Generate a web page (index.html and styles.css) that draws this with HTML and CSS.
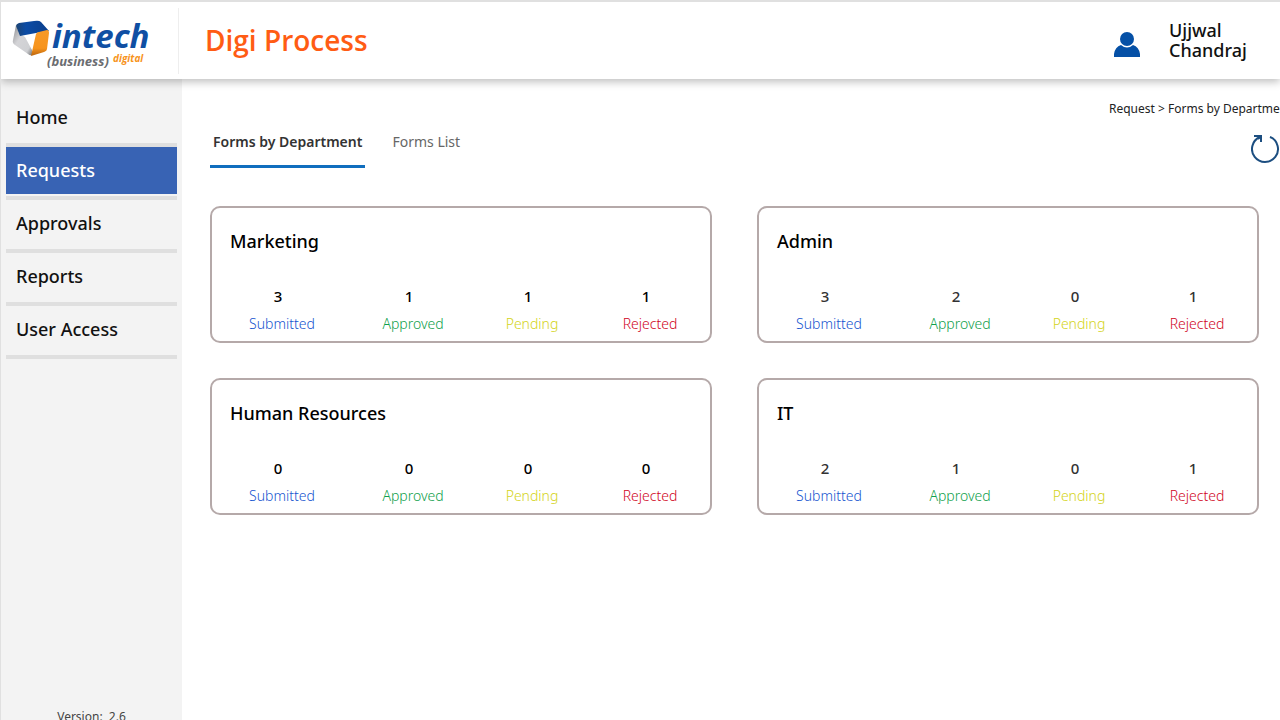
FILE: index.html
```
<!DOCTYPE html>
<html lang="en">
<head>
  <meta charset="UTF-8">
  <title>Digi Process</title>
  <link rel="stylesheet" href="styles.css">
</head>
<body>
  <header class="header">
    <a class="logo" href="#" aria-label="intech (business) digital">
      <svg width="140" height="58" viewBox="0 0 140 58">
        <defs>
          <linearGradient id="grey" x1="0" y1="0" x2="1" y2="1">
            <stop offset="0" stop-color="#88898c"/>
            <stop offset="0.4" stop-color="#d4d4d7"/>
            <stop offset="0.8" stop-color="#cfd0d3"/>
            <stop offset="1" stop-color="#75777a"/>
          </linearGradient>
          <linearGradient id="orange" x1="0" y1="0" x2="0" y2="1">
            <stop offset="0" stop-color="#f79a28"/>
            <stop offset="0.7" stop-color="#f7941d"/>
            <stop offset="1" stop-color="#b9640c"/>
          </linearGradient>
          <linearGradient id="blue" x1="0" y1="0" x2="1" y2="0">
            <stop offset="0" stop-color="#1d4472"/>
            <stop offset="0.3" stop-color="#0b4ba5"/>
            <stop offset="1" stop-color="#0b3f8c"/>
          </linearGradient>
        </defs>
        <path d="M4 13 L1 28 Q0 31 3 33 L16 42 Q18 44 20 43 L20 36 L14 24 L7 21 Z" fill="url(#grey)"/>
        <path d="M8 22 L25 20 L22 30 L20 38 L13 25 Z" fill="#fff"/>
        <path d="M4 14 Q4 12 7 11 L22 9 Q27 8 29 10 L37 19 L24 21 L8 24 Z" fill="url(#blue)"/>
        <path d="M24 22 Q25 20 27 20 L35 18 Q37 18 37 21 L35 37 Q35 39 32 40 L19 44 Z" fill="url(#orange)"/>
        <text class="logo-name" x="40" y="36">intech</text>
        <text class="logo-sub" x="35" y="54">(business)</text>
        <text class="logo-digital" x="101" y="50">digital</text>
      </svg>
    </a>
    <h1>Digi Process</h1>
    <div class="user">
      <svg width="26" height="26" viewBox="0 0 26 26" fill="#0550a6">
        <ellipse cx="13" cy="7" rx="7" ry="7"/>
        <path d="M0 25 V22 Q1 15 7 13 Q13 18 19 13 Q25 15 26 22 V25 Z"/>
      </svg>
      <span class="user-name">Ujjwal<br>Chandraj</span>
    </div>
  </header>

  <div class="layout">
    <aside class="sidebar">
      <nav>
        <a href="#">Home</a>
        <a href="#" class="active">Requests</a>
        <a href="#">Approvals</a>
        <a href="#">Reports</a>
        <a href="#">User Access</a>
      </nav>
      <p class="version">Version:&nbsp; 2.6</p>
    </aside>

    <main>
      <div class="breadcrumb">Request &gt; Forms by Department</div>

      <div class="toolbar">
        <div class="tabs" role="tablist">
          <button type="button" role="tab" aria-selected="true" class="tab active">Forms by Department</button>
          <button type="button" role="tab" aria-selected="false" class="tab">Forms List</button>
        </div>
        <button type="button" class="refresh" aria-label="Refresh">
          <svg width="29" height="30" viewBox="0 0 29 30" fill="none" stroke="#1c4e80" stroke-width="2">
            <path d="M19 3 A13 13 0 1 1 9 3"/>
            <path d="M3 2 H10 V8 M10 2 L7 5"/>
          </svg>
        </button>
      </div>

      <!-- Departments -->
      <div class="cards">
        <section class="card">
          <h2>Marketing</h2>
          <dl class="stats">
            <div class="submitted"><dt>Submitted</dt><dd>3</dd></div>
            <div class="approved"><dt>Approved</dt><dd>1</dd></div>
            <div class="pending"><dt>Pending</dt><dd>1</dd></div>
            <div class="rejected"><dt>Rejected</dt><dd>1</dd></div>
          </dl>
        </section>
        <section class="card">
          <h2>Admin</h2>
          <dl class="stats soft">
            <div class="submitted"><dt>Submitted</dt><dd>3</dd></div>
            <div class="approved"><dt>Approved</dt><dd>2</dd></div>
            <div class="pending"><dt>Pending</dt><dd>0</dd></div>
            <div class="rejected"><dt>Rejected</dt><dd>1</dd></div>
          </dl>
        </section>
        <section class="card">
          <h2>Human Resources</h2>
          <dl class="stats">
            <div class="submitted"><dt>Submitted</dt><dd>0</dd></div>
            <div class="approved"><dt>Approved</dt><dd>0</dd></div>
            <div class="pending"><dt>Pending</dt><dd>0</dd></div>
            <div class="rejected"><dt>Rejected</dt><dd>0</dd></div>
          </dl>
        </section>
        <section class="card">
          <h2>IT</h2>
          <dl class="stats soft">
            <div class="submitted"><dt>Submitted</dt><dd>2</dd></div>
            <div class="approved"><dt>Approved</dt><dd>1</dd></div>
            <div class="pending"><dt>Pending</dt><dd>0</dd></div>
            <div class="rejected"><dt>Rejected</dt><dd>1</dd></div>
          </dl>
        </section>
      </div>
    </main>
  </div>
</body>
</html>
```
FILE: styles.css
```
* {
  box-sizing: border-box;
}

body {
  margin: 0;
  height: 100vh;
  overflow: hidden;
  display: flex;
  flex-direction: column;
  background-color: #fff;
  border-top: 2px solid #e0e0e0;
  border-left: 1px solid #e0e0e0;
  font-family: "Noto Sans", "Open Sans", sans-serif;
  color: #111;
}

h1, h2, p, dl, dd {
  margin: 0;
}

button {
  padding: 0;
  border: 0;
  background: none;
  font-family: inherit;
  cursor: pointer;
}

svg {
  display: block;
}

.header {
  flex: none;
  display: flex;
  align-items: center;
  height: 77px;
  background-color: #fff;
  box-shadow: 0 3px 8px rgba(0, 0, 0, 0.25);
  z-index: 1;
}

.logo {
  display: flex;
  align-items: center;
  width: 178px;
  height: 66px;
  padding-left: 11px;
  border-right: 1px solid #eee;
}

.logo-name {
  font: italic 700 33px "Open Sans", sans-serif;
  fill: #0f4fa3;
}

.logo-sub {
  font: italic 700 13px "Open Sans", sans-serif;
  fill: #6b6d71;
}

.logo-digital {
  font: italic 700 10px "Open Sans", sans-serif;
  fill: #f7941d;
}

.header h1 {
  margin-left: 26px;
  padding-bottom: 2px;
  font: 600 28px "Open Sans", sans-serif;
  color: #ff5c14;
}

.user {
  display: flex;
  align-items: center;
  gap: 29px;
  width: 166px;
  margin-left: auto;
}

.user svg {
  margin-top: 8px;
}

.user-name {
  padding-bottom: 2px;
  font-size: 18px;
  font-weight: 500;
  line-height: 20px;
}

.layout {
  flex: 1;
  display: flex;
}

.sidebar {
  flex: none;
  width: 181px;
  padding: 15px 5px 0;
  display: flex;
  flex-direction: column;
  background-color: #f3f3f3;
}

.sidebar a {
  display: block;
  width: 171px;
  height: 53px;
  padding-left: 10px;
  border-bottom: 4px solid #dfdfdf;
  font-size: 18px;
  font-weight: 500;
  line-height: 47px;
  color: #111;
  text-decoration: none;
}

.sidebar a.active {
  background-color: #3863b4;
  background-clip: padding-box;
  box-shadow: inset 0 -2px #f3f3f3;
  color: #fff;
}

.version {
  margin-top: auto;
  margin-bottom: -7px;
  text-align: center;
  font-size: 12px;
  line-height: 20px;
  color: #444;
}

main {
  flex: 1;
  min-width: 0;
  padding: 20px 0 0 28px;
}

.breadcrumb {
  width: 171px;
  height: 18px;
  margin-left: auto;
  overflow: hidden;
  white-space: nowrap;
  font-size: 12px;
  line-height: 20px;
  color: #222;
}

.toolbar {
  display: flex;
  justify-content: space-between;
  align-items: center;
  height: 63px;
}

.tabs {
  display: flex;
  gap: 24px;
  padding-bottom: 12px;
}

.tab {
  height: 50px;
  padding: 0 3px;
  border-bottom: 3px solid transparent;
  font-size: 14px;
  color: #666;
}

.tab.active {
  border-color: #106ebe;
  font-weight: 600;
  color: #333;
}

.cards {
  display: grid;
  grid-template-columns: 1fr 1fr;
  gap: 35px 45px;
  padding: 26px 21px 0 0;
}

.card {
  height: 137px;
  padding-top: 19px;
  border: 2px solid #b5a9a9;
  border-radius: 10px;
}

.card h2 {
  padding-left: 18px;
  font-size: 18px;
  font-weight: 500;
  line-height: 28px;
  color: #000;
}

.stats {
  display: grid;
  grid-template-columns: 140fr 122fr 116fr 120fr;
  margin-top: 28px;
}

.stats div {
  display: flex;
  flex-direction: column-reverse;
  text-align: center;
  line-height: 27px;
}

.stats dt {
  font-size: 14px;
  font-weight: 300;
}

.stats dd {
  padding-right: 8px;
  font-size: 15px;
  font-weight: 500;
  color: #000;
}

.stats.soft dd {
  color: #333;
}

.submitted {
  color: #1554cf;
}

.approved {
  color: #0fa04c;
}

.pending {
  color: #d4d420;
}

.rejected {
  color: #d0041c;
}
```
